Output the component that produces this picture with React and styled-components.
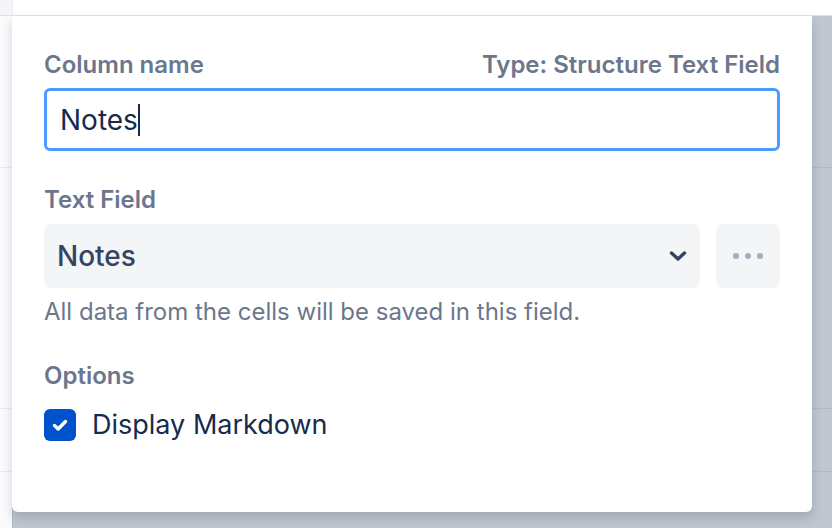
import styled, { createGlobalStyle } from 'styled-components';

const Global = createGlobalStyle`
  html, body {
    margin: 0;
    padding: 0;
    background: #ffffff;
    font-family: Inter, 'Noto Sans', sans-serif;
    -webkit-font-smoothing: antialiased;
  }
`;

const rowHeights = [15, 151, 240, 62, 59];

const App = () => {
  return (
    <Page>
      <Global />
      <Table>
        {rowHeights.map((h, i) => (
          <TableRow key={i} $h={h} $head={i === 0}>
            <SideCell $head={i === 0} />
            <MainCell />
          </TableRow>
        ))}
      </Table>

      <Popover>
        <LabelRow>
          <Label>Column name</Label>
          <Label>Type: Structure Text Field</Label>
        </LabelRow>
        <NameInput>
          Notes<Caret />
        </NameInput>

        <Section>
          <Label>Text Field</Label>
          <SelectRow>
            <Select>
              <span>Notes</span>
              <svg width="24" height="24" viewBox="0 0 24 24">
                <path d="M5.5 9 L12 15 L18.5 9" fill="none" stroke="#344563" strokeWidth="3.4" strokeLinecap="round" strokeLinejoin="round" />
              </svg>
            </Select>
            <MoreButton>
              <Dot /><Dot /><Dot />
            </MoreButton>
          </SelectRow>
          <Helper>All data from the cells will be saved in this field.</Helper>
        </Section>

        <Section>
          <Label>Options</Label>
          <CheckRow>
            <CheckBox>
              <svg width="24" height="24" viewBox="0 0 24 24">
                <path d="M6.5 12.5 L10.2 16 L17.5 8.5" fill="none" stroke="#ffffff" strokeWidth="3.4" strokeLinecap="round" strokeLinejoin="round" />
              </svg>
            </CheckBox>
            <CheckLabel>Display Markdown</CheckLabel>
          </CheckRow>
        </Section>
      </Popover>
    </Page>
  );
};

export default App;

const Page = styled.div`
  position: relative;
  width: 832px;
  height: 528px;
  overflow: hidden;
  background: #ffffff;
`;

const Table = styled.div`
  display: flex;
  flex-direction: column;
`;

const TableRow = styled.div`
  display: flex;
  height: ${(p) => p.$h}px;
  border-bottom: 1px solid ${(p) => (p.$head ? '#dfe1e6' : '#ebecf0')};
`;

const SideCell = styled.div`
  width: 12px;
  background: ${(p) => (p.$head ? '#f4f5f7' : '#fafbfc')};
  border-right: 1px solid #ebecf0;
`;

const MainCell = styled.div`
  flex: 1;
  background: #ffffff;
`;

const Popover = styled.div`
  position: absolute;
  left: 12px;
  top: 16px;
  width: 800px;
  height: 496px;
  box-sizing: border-box;
  padding: 32px 32px 0;
  background: #ffffff;
  border-radius: 0 0 6px 6px;
  box-shadow: 0 6px 12px rgba(9, 30, 66, 0.18), 20px 20px 0 20px rgba(9, 30, 66, 0.25);
  display: flex;
  flex-direction: column;
`;

const LabelRow = styled.div`
  display: flex;
  justify-content: space-between;
  align-items: center;
  height: 34px;
`;

const Label = styled.div`
  font-size: 24px;
  font-weight: 600;
  color: #6b778c;
  line-height: 34px;
`;

const NameInput = styled.div`
  margin-top: 6px;
  height: 63px;
  box-sizing: border-box;
  border: 3px solid #4c9aff;
  border-radius: 6px;
  padding: 0 13px;
  display: flex;
  align-items: center;
  font-size: 28px;
  color: #172b4d;
`;

const Caret = styled.span`
  display: inline-block;
  width: 2px;
  height: 32px;
  background: #172b4d;
`;

const Section = styled.div`
  margin-top: 32px;
  display: flex;
  flex-direction: column;
`;

const SelectRow = styled.div`
  display: flex;
  gap: 16px;
  margin-top: 7px;
`;

const Select = styled.div`
  flex: 1;
  height: 64px;
  background: #f4f5f7;
  border-radius: 6px;
  padding: 0 10px 0 13px;
  display: flex;
  align-items: center;
  justify-content: space-between;
  font-size: 28px;
  font-weight: 500;
  color: #344563;
`;

const MoreButton = styled.div`
  width: 64px;
  height: 64px;
  background: #f4f5f7;
  border-radius: 6px;
  display: flex;
  align-items: center;
  justify-content: center;
  gap: 6px;
`;

const Dot = styled.span`
  width: 6px;
  height: 6px;
  border-radius: 50%;
  background: #a5adba;
`;

const Helper = styled.div`
  margin-top: 9px;
  font-size: 24px;
  color: #6b778c;
  line-height: 30px;
`;

const CheckRow = styled.div`
  display: flex;
  align-items: center;
  gap: 16px;
  margin-top: 15px;
`;

const CheckBox = styled.div`
  width: 32px;
  height: 32px;
  border-radius: 6px;
  background: #0052cc;
  display: flex;
  align-items: center;
  justify-content: center;
`;

const CheckLabel = styled.div`
  font-size: 27px;
  color: #172b4d;
`;
